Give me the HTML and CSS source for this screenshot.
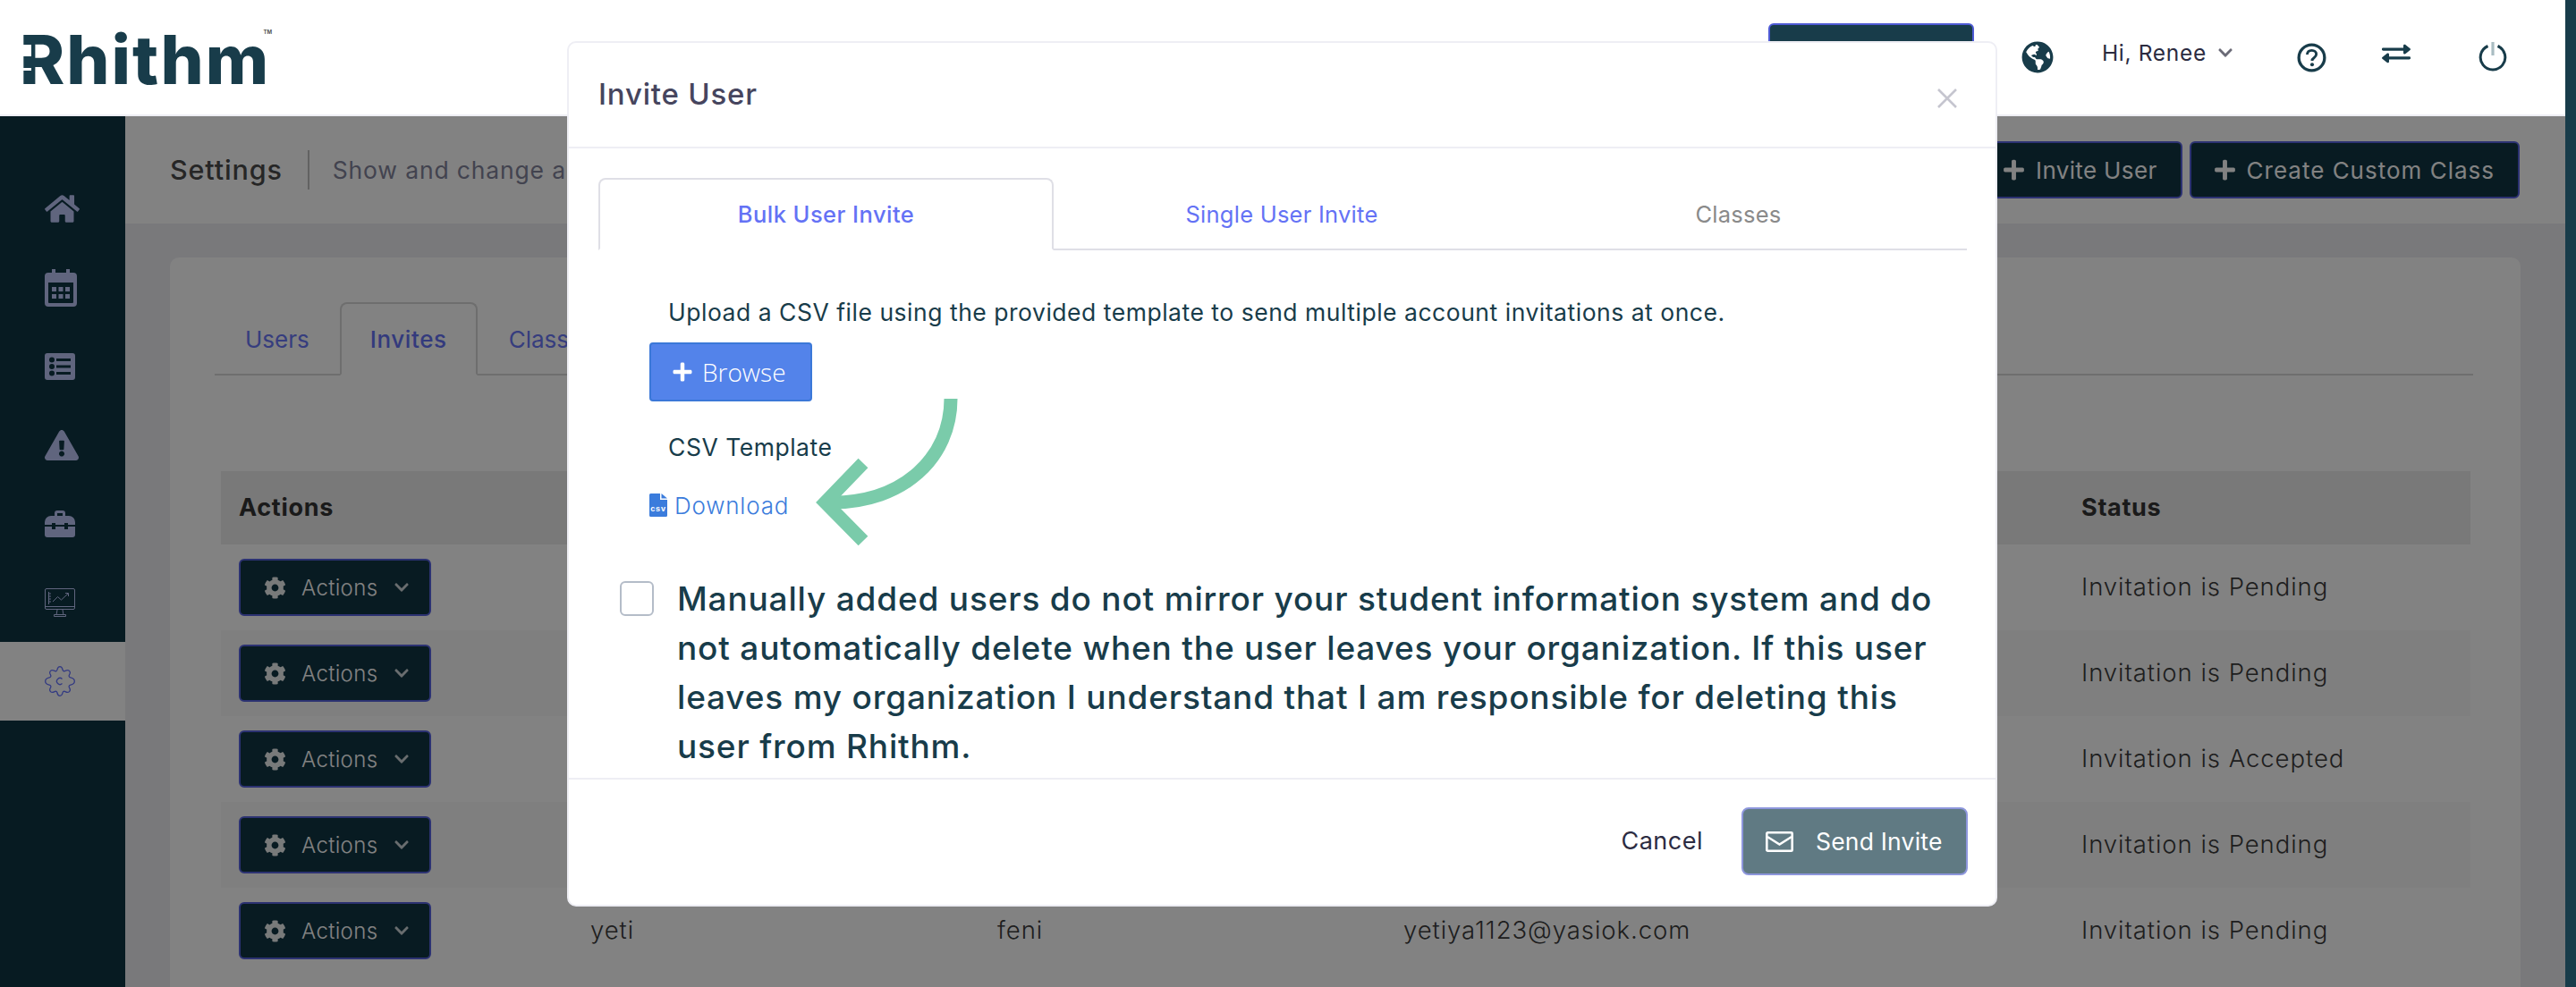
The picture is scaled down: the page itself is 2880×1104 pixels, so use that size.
FILE: index.html
```html
<!DOCTYPE html>
<html lang="en">
<head>
<meta charset="utf-8">
<title>Settings - Rhithm</title>
<link rel="stylesheet" href="styles.css">
</head>
<body>
<svg class="defs" width="0" height="0" aria-hidden="true">
  <symbol id="i-plus" viewBox="0 0 448 512"><path d="M416 208H272V64c0-17.67-14.33-32-32-32h-32c-17.67 0-32 14.33-32 32v144H32c-17.67 0-32 14.33-32 32v32c0 17.67 14.33 32 32 32h144v144c0 17.67 14.33 32 32 32h32c17.67 0 32-14.33 32-32V304h144c17.67 0 32-14.33 32-32v-32c0-17.67-14.33-32-32-32z"/></symbol>
  <symbol id="i-cog" viewBox="0 0 512 512"><path d="M487.4 315.7l-42.6-24.6c4.3-23.2 4.3-47 0-70.2l42.6-24.6c4.9-2.8 7.1-8.6 5.5-14-11.1-35.6-30-67.8-54.7-94.6-3.8-4.1-10-5.1-14.8-2.3L380.8 110c-17.9-15.4-38.5-27.3-60.8-35.1V25.8c0-5.6-3.9-10.5-9.4-11.7-36.7-8.2-74.3-7.8-109.2 0-5.5 1.2-9.4 6.1-9.4 11.7V75c-22.2 7.9-42.8 19.8-60.8 35.1L88.7 85.5c-4.9-2.8-11-1.9-14.8 2.3-24.7 26.7-43.6 58.9-54.7 94.6-1.7 5.4.6 11.2 5.5 14L67.3 221c-4.3 23.2-4.3 47 0 70.2l-42.6 24.6c-4.9 2.8-7.1 8.6-5.5 14 11.1 35.6 30 67.8 54.7 94.6 3.8 4.1 10 5.1 14.8 2.3l42.6-24.6c17.9 15.4 38.5 27.3 60.8 35.1v49.2c0 5.6 3.9 10.5 9.4 11.7 36.7 8.2 74.3 7.8 109.2 0 5.5-1.2 9.4-6.1 9.4-11.7v-49.2c22.2-7.9 42.8-19.8 60.8-35.1l42.6 24.6c4.9 2.8 11 1.9 14.8-2.3 24.7-26.7 43.6-58.9 54.7-94.6 1.5-5.5-.7-11.3-5.6-14.1zM256 336c-44.1 0-80-35.9-80-80s35.9-80 80-80 80 35.9 80 80-35.9 80-80 80z"/></symbol>
  <symbol id="i-chev" viewBox="0 0 448 512"><path d="M207.029 381.476L12.686 187.132c-9.373-9.373-9.373-24.569 0-33.941l22.667-22.667c9.357-9.357 24.522-9.375 33.901-.04L224 284.505l154.745-154.021c9.379-9.335 24.544-9.317 33.901.04l22.667 22.667c9.373 9.373 9.373 24.569 0 33.941L240.971 381.476c-9.373 9.372-24.569 9.372-33.942 0z"/></symbol>
</svg>
<div class="app">
  <div class="page">
    <header class="topbar">
      <div class="logo"><span class="logo-text">Rhithm</span><span class="logo-tm">TM</span></div>
      <div class="topnav">
        <div class="bell"><span class="bell-badge"></span></div>
        <button class="top-btn" type="button"></button>
        <svg class="globe" viewBox="0 0 496 512"><path d="M248 8C111.03 8 0 119.03 0 256s111.03 248 248 248 248-111.03 248-248S384.97 8 248 8zm82.29 357.6c-3.9 3.88-7.99 7.95-11.31 11.28-2.99 3-5.1 6.7-6.17 10.71-1.51 5.66-2.73 11.38-4.77 16.87l-17.39 46.85c-13.76 3-28 4.69-42.65 4.69v-27.38c1.69-12.62-7.64-36.26-22.63-51.25-6-6-9.37-14.14-9.37-22.63v-32.01c0-11.64-6.27-22.34-16.46-27.97-14.37-7.95-34.81-19.06-48.81-26.11-11.48-5.78-22.1-13.14-31.65-21.75l-.8-.72a114.792 114.792 0 0 1-18.06-20.74c-9.38-13.77-24.66-36.42-34.59-51.14 20.47-45.5 57.36-82.04 103.2-101.89l24.01 12.01C203.48 89.74 216 82.01 216 70.11v-11.3c7.99-1.29 16.12-2.11 24.39-2.42l28.3 28.3c6.25 6.25 6.25 16.38 0 22.63L264 112l-10.34 10.34c-3.12 3.12-3.12 8.19 0 11.31l4.69 4.69c3.12 3.12 3.12 8.19 0 11.31l-8 8a8.008 8.008 0 0 1-5.66 2.34h-8.99c-2.08 0-4.08.81-5.58 2.27l-9.92 9.65a8.008 8.008 0 0 0-1.58 9.31l15.59 31.19c2.66 5.32-1.21 11.58-7.15 11.58h-5.64c-1.93 0-3.79-.7-5.24-1.96l-9.28-8.06a16.017 16.017 0 0 0-15.55-3.1l-31.17 10.39a11.95 11.95 0 0 0-8.17 11.34c0 4.53 2.56 8.66 6.61 10.69l11.08 5.54c9.41 4.71 19.79 7.16 30.31 7.16s22.59 27.29 32 32h66.75c8.49 0 16.62 3.37 22.63 9.37l13.69 13.69a30.503 30.503 0 0 1 8.93 21.57 46.536 46.536 0 0 1-13.72 32.98zM417 274.25c-5.79-1.45-10.84-5-14.15-9.97l-17.98-26.97a23.97 23.97 0 0 1 0-26.62l19.59-29.38c2.32-3.47 5.5-6.29 9.24-8.15l12.98-6.49C440.2 193.59 448 223.87 448 256c0 8.67-.74 17.16-1.82 25.54L417 274.25z"/></svg>
        <div class="greeting"><span>Hi, Renee</span><svg class="greeting-chev"><use href="#i-chev"/></svg></div>
        <svg class="help" viewBox="0 0 34 34"><circle cx="17" cy="17" r="14.8" fill="none" stroke="#183c4a" stroke-width="3.4"/><path d="M11.8 13.4c.2-3 2.400-4.800 5.300-4.800 3 0 5.200 1.800 5.200 4.400 0 2.100-1.100 3.200-2.700 4.300-1.500 1-2.100 1.700-2.100 3.400" fill="none" stroke="#183c4a" stroke-width="3"/><circle cx="17.500" cy="25" r="2.100" fill="#183c4a"/></svg>
        <svg class="swap" viewBox="0 0 512 512" preserveAspectRatio="none"><path d="M0 168v-16c0-13.255 10.745-24 24-24h360V80c0-21.367 25.899-32.042 40.971-16.971l80 80c9.372 9.373 9.372 24.569 0 33.941l-80 80C409.956 271.982 384 261.456 384 240v-48H24c-13.255 0-24-10.745-24-24zm488 152H128v-48c0-21.314-25.862-32.08-40.971-16.971l-80 80c-9.372 9.373-9.372 24.569 0 33.941l80 80C102.057 463.997 128 453.437 128 432v-48h360c13.255 0 24-10.745 24-24v-16c0-13.255-10.745-24-24-24z"/></svg>
        <svg class="power" viewBox="0 0 32 32"><path d="M10.500 4.500A13.800 13.800 0 1 0 21.500 4.500" fill="none" stroke="#183c4a" stroke-width="3"/><path d="M16 0v15" stroke="#a9bcc2" stroke-width="3.200" fill="none"/></svg>
      </div>
    </header>

    <div class="workspace">
      <nav class="sidebar">
        <a class="nav-item"><svg class="nav-icon nav-home" viewBox="0 0 576 512"><path d="M280.37 148.26L96 300.11V464a16 16 0 0 0 16 16l112.06-.29a16 16 0 0 0 15.92-16V368a16 16 0 0 1 16-16h64a16 16 0 0 1 16 16v95.64a16 16 0 0 0 16 16.05L464 480a16 16 0 0 0 16-16V300L295.67 148.26a12.19 12.19 0 0 0-15.3 0zM571.6 251.47L488 182.56V44.05a12 12 0 0 0-12-12h-56a12 12 0 0 0-12 12v72.61L318.47 43a48 48 0 0 0-61 0L4.34 251.47a12 12 0 0 0-1.6 16.9l25.5 31A12 12 0 0 0 45.15 301l235.22-193.74a12.19 12.19 0 0 1 15.3 0L530.9 301a12 12 0 0 0 16.9-1.6l25.5-31a12 12 0 0 0-1.7-16.93z"/></svg></a>
        <a class="nav-item"><svg class="nav-icon nav-cal" viewBox="0 0 36 42"><path fill-rule="evenodd" d="M8 0h4v4h12V0h4v4h4a4 4 0 0 1 4 4v30a4 4 0 0 1-4 4H4a4 4 0 0 1-4-4V8a4 4 0 0 1 4-4h4zM4 15v22a1 1 0 0 0 1 1h26a1 1 0 0 0 1-1V15zM8 20h5v5H8zM15.500 20h5v5h-5zM23 20h5v5h-5zM8 28h5v5H8zM15.500 28h5v5h-5zM23 28h5v5h-5z"/></svg></a>
        <a class="nav-item"><svg class="nav-icon nav-list" viewBox="0 0 34 30"><path fill-rule="evenodd" d="M3 0h28a3 3 0 0 1 3 3v24a3 3 0 0 1-3 3H3a3 3 0 0 1-3-3V3a3 3 0 0 1 3-3zM8 4.500a3 3 0 1 0 0 6 3 3 0 0 0 0-6zM8 12a3 3 0 1 0 0 6 3 3 0 0 0 0-6zM8 19.500a3 3 0 1 0 0 6 3 3 0 0 0 0-6zM13 6v3h16V6zM13 13.500v3h16v-3zM13 21v3h16v-3z"/></svg></a>
        <a class="nav-item"><svg class="nav-icon nav-warn" viewBox="0 0 576 512" preserveAspectRatio="none"><path d="M569.517 440.013C587.975 472.007 564.806 512 527.94 512H48.054c-36.937 0-59.999-40.055-41.577-71.987L246.423 24.035c18.467-32.009 64.72-31.951 83.154 0l239.94 415.978zM288 354c-25.405 0-46 20.595-46 46s20.595 46 46 46 46-20.595 46-46-20.595-46-46-46zm-43.673-165.346l7.418 136c.347 6.364 5.609 11.346 11.982 11.346h48.546c6.373 0 11.635-4.982 11.982-11.346l7.418-136c.375-6.874-5.098-12.654-11.982-12.654h-63.383c-6.884 0-12.356 5.78-11.981 12.654z"/></svg></a>
        <a class="nav-item"><svg class="nav-icon nav-tool" viewBox="0 0 34 30"><path fill-rule="evenodd" d="M11 6V3a3 3 0 0 1 3-3h6a3 3 0 0 1 3 3v3h4a7 7 0 0 1 7 7v3h-8v-2h-4v2H12v-2H8v2H0v-3a7 7 0 0 1 7-7zM14 3v3h6V3z"/><path d="M0 18h8v3h4v-3h10v3h4v-3h8v9a3 3 0 0 1-3 3H3a3 3 0 0 1-3-3z"/></svg></a>
        <a class="nav-item"><svg class="nav-icon nav-mon" viewBox="0 0 34 32" fill="none" stroke="currentColor" stroke-width="1"><rect x=".5" y=".5" width="33" height="23" rx="1.500"/><path d="M.5 20.500h33M14 24l-.8 5M20 24l.8 5M10.500 31.500v-2h13v2zM4.500 4v14M9 15l5.500-5.500 4 3.500 7.500-7"/><path d="M23 5.500h3.500V9M5 6h2M5 9h2M5 12h2M5 15h2"/></svg></a>
        <a class="nav-item nav-active"><svg class="nav-icon nav-gear" viewBox="0 0 34 34" fill="none" stroke="currentColor" stroke-width="1.300"><path d="M14 4c.4-2 1.300-3.300 3-3.300S19.600 2 20 4c.3 1.600 1.700 2.200 3 1.400 1.700-1 3.300-1.200 4.500 0s1 2.900 0 4.500c-.8 1.300-.2 2.700 1.400 3 2 .4 4.400 1.500 4.400 4.100s-2.400 3.700-4.400 4.100c-1.600.3-2.200 1.700-1.400 3 1 1.600 1.200 3.300 0 4.500s-2.800 1-4.500 0c-1.300-.8-2.700-.2-3 1.400-.4 2-1.300 3.300-3 3.300s-2.600-1.300-3-3.300c-.3-1.600-1.700-2.200-3-1.400-1.700 1-3.300 1.200-4.500 0s-1-2.900 0-4.500c.8-1.300.2-2.700-1.400-3-2-.4-4.400-1.500-4.400-4.100s2.400-3.700 4.400-4.100c1.600-.3 2.200-1.700 1.400-3-1-1.600-1.200-3.300 0-4.500s2.800-1 4.500 0c1.300.8 2.700.2 3-1.400z"/><path d="M19.500 14.500a3.500 3.500 0 1 0 0 5"/></svg></a>
      </nav>

      <main class="main">
        <div class="subheader">
          <div class="subheader-title"><h1 class="page-title">Settings</h1><p class="page-desc">Show and change account settings</p></div>
          <div class="subheader-actions">
            <button class="dark-btn dark-btn-tight" type="button"><svg class="btn-plus"><use href="#i-plus"/></svg>Invite User</button>
            <button class="dark-btn" type="button"><svg class="btn-plus"><use href="#i-plus"/></svg>Create Custom Class</button>
          </div>
        </div>
        <div class="content">
          <section class="card">
            <div class="tabs">
              <a class="tab">Users</a>
              <a class="tab tab-active">Invites</a>
              <a class="tab tab-last">Classes</a>
            </div>
            <div class="table">
              <div class="tr th"><div>Actions</div><div></div><div></div><div></div><div>Status</div></div>
              <div class="tr"><div><button class="action-btn" type="button"><svg class="action-cog"><use href="#i-cog"/></svg><span>Actions</span><svg class="action-chev"><use href="#i-chev"/></svg></button></div><div></div><div></div><div></div><div>Invitation is Pending</div></div>
              <div class="tr"><div><button class="action-btn" type="button"><svg class="action-cog"><use href="#i-cog"/></svg><span>Actions</span><svg class="action-chev"><use href="#i-chev"/></svg></button></div><div></div><div></div><div></div><div>Invitation is Pending</div></div>
              <div class="tr"><div><button class="action-btn" type="button"><svg class="action-cog"><use href="#i-cog"/></svg><span>Actions</span><svg class="action-chev"><use href="#i-chev"/></svg></button></div><div></div><div></div><div></div><div>Invitation is Accepted</div></div>
              <div class="tr"><div><button class="action-btn" type="button"><svg class="action-cog"><use href="#i-cog"/></svg><span>Actions</span><svg class="action-chev"><use href="#i-chev"/></svg></button></div><div></div><div></div><div></div><div>Invitation is Pending</div></div>
              <div class="tr"><div><button class="action-btn" type="button"><svg class="action-cog"><use href="#i-cog"/></svg><span>Actions</span><svg class="action-chev"><use href="#i-chev"/></svg></button></div><div>yeti</div><div>feni</div><div>yetiya1123@yasiok.com</div><div>Invitation is Pending</div></div>
            </div>
          </section>
        </div>
      </main>
    </div>
    <div class="backdrop"></div>
  </div>
  <div class="scrollbar"></div>

  <div class="modal">
    <div class="modal-head">
      <h2 class="modal-title">Invite User</h2>
      <svg class="modal-close" viewBox="0 0 24 24" fill="none" stroke="#c5c5cf" stroke-width="2.600"><path d="M2 2l20 20M22 2L2 22"/></svg>
    </div>
    <div class="modal-body">
      <div class="modal-tabs">
        <a class="mtab mtab-active">Bulk User Invite</a>
        <a class="mtab mtab-link">Single User Invite</a>
        <a class="mtab mtab-muted">Classes</a>
      </div>
      <div class="panel">
        <p class="panel-text panel-upload">Upload a CSV file using the provided template to send multiple account invitations at once.</p>
        <button class="browse-btn" type="button"><svg class="browse-plus"><use href="#i-plus"/></svg>Browse</button>
        <p class="panel-text panel-csv">CSV Template</p>
        <a class="download"><svg class="csv-icon" viewBox="0 0 20 26"><path d="M1.500 0H12v7h8v17.500a1.500 1.500 0 0 1-1.500 1.500h-17A1.500 1.500 0 0 1 0 24.500v-23A1.500 1.500 0 0 1 1.500 0z" fill="#3b7cdc"/><path d="M13.500 0L20 5.500h-6.500z" fill="#3b7cdc"/><text x="10" y="20" text-anchor="middle" class="csv-label">csv</text></svg><span>Download</span></a>
        <svg class="arrow" viewBox="0 0 170 180" fill="none" stroke="#7acbaa" stroke-width="15"><path d="M159 0C159 66 106 116 26 116"/><path d="M61 72L18.600 116 61 159"/></svg>
        <label class="agree">
          <span class="agree-box"></span>
          <span class="agree-text">Manually added users do not mirror your student information system and do not automatically delete when the user leaves your organization. If this user leaves my organization I understand that I am responsible for deleting this user from Rhithm.</span>
        </label>
      </div>
    </div>
    <div class="modal-foot">
      <a class="cancel">Cancel</a>
      <button class="send-btn" type="button"><svg class="send-icon" viewBox="0 0 31 23" fill="none" stroke="#fff" stroke-width="2.600"><rect x="1.300" y="1.300" width="28.400" height="20.400" rx="1"/><path d="M2 6l13.500 8.500L29 6"/></svg>Send Invite</button>
    </div>
  </div>
</div>
</body>
</html>
```
FILE: styles.css
```css
* { box-sizing: border-box; }
html, body { margin: 0; padding: 0; }
body { font-family: Inter, "Liberation Sans", sans-serif; background: #fff; overflow: hidden; }
h1, h2, p { margin: 0; }
button { font-family: inherit; cursor: pointer; }
svg { display: block; overflow: visible; }
svg:not([fill]) { fill: currentColor; }
.defs { position: absolute; }

.app { position: relative; display: flex; width: 2880px; height: 1104px; overflow: hidden; }
.page { position: relative; flex: 1; display: flex; flex-direction: column; min-width: 0; }
.scrollbar { width: 12px; background: #183c4a; }
.backdrop { position: absolute; left: 0; right: 0; top: 130px; bottom: 0; background: rgba(0, 0, 0, .49); z-index: 2; }

/* Top bar */
.topbar { height: 130px; flex: none; display: flex; align-items: center; justify-content: space-between; border-bottom: 2px solid #eeeef4; padding-left: 22px; background: #fff; }
.logo { position: relative; display: flex; color: #183c4a; }
.logo-text { font-family: Inter, sans-serif; font-weight: 800; font-size: 76px; line-height: 76px; letter-spacing: 2px; margin-top: 4px; }
.logo-text::before { content: ""; position: absolute; left: 0; top: 26px; width: 13px; height: 13px; background: #fff; }
.logo-text::after { content: ""; position: absolute; left: 0; top: 52px; width: 13px; height: 3px; background: #fff; }
.logo-tm { position: absolute; right: -2px; top: 8px; font-size: 6px; font-weight: 700; color: #555; }
.topnav { display: flex; align-items: center; padding-right: 65px; color: #183c4a; }
.bell { position: relative; width: 61px; height: 36px; border-top: 2px solid #333; align-self: flex-start; margin-top: 45px; }
.bell-badge { position: absolute; right: 0; top: -17px; width: 32px; height: 32px; border-radius: 50%; background: #f07174; }
.top-btn { width: 230px; height: 76px; margin-left: 36px; background: #183c4a; border: 2px solid #4f5bd5; border-radius: 6px; }
.globe { width: 36px; height: 36px; margin-left: 53px; }
.greeting { display: flex; align-items: center; margin-left: 54px; margin-top: -10px; font-size: 24.500px; font-weight: 400; color: #2b2b3f; letter-spacing: .7px; }
.greeting-chev { width: 16px; height: 18px; margin-left: 13px; color: #6a6a76; }
.help { width: 33px; height: 33px; margin-left: 72px; }
.swap { width: 32px; height: 26px; margin-left: 62px; margin-top: -8px; }
.power { width: 32px; height: 32px; margin-left: 76px; margin-top: -2px; }

/* Workspace */
.workspace { flex: 1; display: flex; min-height: 0; }
.sidebar { width: 140px; flex: none; background: #0f3543; padding-top: 60px; color: #bcc6f8; }
.nav-item { display: flex; align-items: center; height: 88px; padding-left: 50px; }
.nav-active { background: #fff; color: #6674ff; }
.nav-home { width: 39px; height: 35px; margin-top: -2px; }
.nav-cal { width: 36px; height: 42px; }
.nav-list { width: 34px; height: 30px; }
.nav-warn { width: 38px; height: 34px; }
.nav-tool { width: 34px; height: 30px; }
.nav-mon { width: 34px; height: 32px; }
.nav-gear { width: 34px; height: 34px; }

.main { flex: 1; min-width: 0; display: flex; flex-direction: column; background: #eeeef2; }
.subheader { height: 120px; flex: none; display: flex; align-items: center; justify-content: space-between; padding: 0 51px 0 50px; background: #fff; }
.subheader-title { display: flex; align-items: center; }
.page-title { font-size: 30.500px; font-weight: 500; color: #4c4c4c; padding-right: 28px; border-right: 2px solid #c0c0c0; line-height: 44px; letter-spacing: .85px; }
.page-desc { font-size: 26.500px; color: #82849c; padding-left: 26px; letter-spacing: .85px; }
.subheader-actions { display: flex; gap: 8px; }
.dark-btn { display: flex; align-items: center; height: 64px; padding: 0 26px; border: 2px solid #5663e0; border-radius: 6px; background: #103543; color: #fff; font-size: 26px; letter-spacing: 1px; }
.dark-btn-tight { letter-spacing: .35px; }
.btn-plus { width: 23px; height: 26px; margin-right: 13px; }

.content { flex: 1; padding: 38px 50px 0; }
.card { height: 900px; background: #fff; border-radius: 10px 10px 0 0; padding: 50px 53px 0 50px; }
.tabs { display: flex; height: 82px; border-bottom: 2px solid #d8d8d8; }
.tab { height: 82px; padding: 0 34px; display: flex; align-items: center; font-size: 26px; color: #6a78f8; letter-spacing: 0; }
.tab-active { border: 2px solid #d8d8d8; border-bottom: 2px solid #fff; border-radius: 8px 8px 0 0; padding: 0 32px; font-weight: 500; color: #6472f5; letter-spacing: .6px; }
.tab-last { padding-left: 35px; }
.table { margin: 107px 3px 0 7px; }
.tr { display: grid; grid-template-columns: 393px 455px 454px 758px 1fr; align-items: center; height: 96px; padding: 0 0 2px 20px; font-size: 27.500px; font-weight: 300; color: #3c3c3c; letter-spacing: .95px; }
.tr:nth-child(odd) { background: #fafafa; }
.th { height: 82px; background: #eeeeee !important; font-size: 27px; font-weight: 700; color: #333; letter-spacing: .7px; }
.action-btn { display: flex; align-items: center; width: 215px; height: 64px; margin-top: 2px; padding: 0 0 0 26px; background: #103543; border: 2px solid #5663e0; border-radius: 6px; color: #fff; }
.action-cog { width: 25px; height: 25px; opacity: .92; }
.action-btn span { margin-left: 17px; font-size: 24px; font-weight: 300; letter-spacing: .35px; }
.action-chev { width: 16px; height: 18px; margin-left: 19px; opacity: .8; }

/* Modal */
.modal { position: absolute; z-index: 5; left: 634px; top: 46px; width: 1599px; height: 968px; display: flex; flex-direction: column; background: #fff; border: 2px solid #eeeef4; border-radius: 10px; overflow: hidden; }
.modal-head { height: 118px; flex: none; display: flex; align-items: center; justify-content: space-between; padding: 0 42px 0 33px; border-bottom: 2px solid #eeeef4; }
.modal-title { font-size: 33px; font-weight: 500; color: #46455e; margin-top: -3px; letter-spacing: .8px; }
.modal-close { width: 24px; height: 24px; margin-top: 8px; }
.modal-body { flex: 1; min-height: 0; overflow: hidden; padding: 33px 32px 0 33px; }
.modal-tabs { display: grid; grid-template-columns: 509px 510px 1fr; height: 81px; border-bottom: 2px solid #dfdfe6; }
.mtab { height: 81px; display: flex; align-items: center; justify-content: center; font-size: 25.500px; padding-bottom: 1px; letter-spacing: .25px; }
.mtab-active { color: #6472f5; font-weight: 500; background: #fff; border: 2px solid #dfdfe6; border-bottom: 2px solid #fff; border-radius: 8px 8px 0 0; letter-spacing: .45px; }
.mtab-link { color: #6472f5; }
.mtab-muted { color: #8a8a8a; }
.panel { position: relative; padding-top: 52px; color: #183c4a; }
.panel-text { font-size: 26.500px; line-height: 34px; letter-spacing: .52px; padding-left: 78px; }
.browse-btn { display: flex; align-items: center; width: 182px; height: 66px; margin: 17px 0 0 57px; padding: 0 0 0 24px; background: #5383ea; border: 2px solid #3b78d8; border-radius: 4px; color: #fff; font-family: "Open Sans", sans-serif; font-weight: 300; font-size: 28px; }
.browse-plus { width: 22px; height: 24px; margin-right: 11px; }
.panel-csv { margin-top: 34px; }
.download { display: flex; align-items: center; height: 34px; margin: 31px 0 0 57px; font-size: 26px; font-weight: 300; color: #3b7cdc; letter-spacing: .8px; }
.csv-icon { width: 20px; height: 26px; margin-right: 8px; }
.csv-label { font-family: "Liberation Sans", sans-serif; font-size: 9px; font-weight: 700; fill: #fff; }
.arrow { position: absolute; left: 235px; top: 166px; width: 170px; height: 180px; }
.agree { display: flex; align-items: flex-start; margin: 60px 0 0 24px; }
.agree-box { flex: none; width: 38px; height: 39px; margin-top: 8px; border: 2px solid #b4bcc8; border-radius: 6px; }
.agree-text { margin-left: 26px; width: 1435px; font-size: 37px; font-weight: 500; line-height: 55px; letter-spacing: .82px; color: #183c4a; }
.modal-foot { height: 142px; flex: none; display: flex; align-items: flex-start; justify-content: flex-end; gap: 43px; padding: 31px 31px 0 0; border-top: 2px solid #eeeef4; }
.cancel { line-height: 76px; font-size: 27px; color: #2c2c42; letter-spacing: .5px; }
.send-btn { display: flex; align-items: center; width: 253px; height: 76px; padding: 0 0 0 25px; background: #607a83; border: 2px solid #8d96dc; border-radius: 8px; color: #fff; font-size: 26.500px; font-weight: 400; letter-spacing: .2px; }
.send-icon { width: 31px; height: 23px; margin-right: 25px; }
```
